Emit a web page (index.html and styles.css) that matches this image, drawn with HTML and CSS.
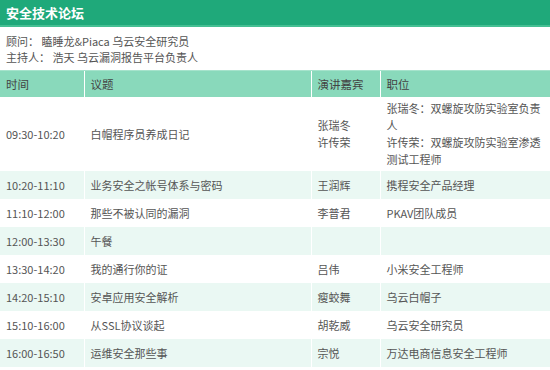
FILE: index.html
```html
<!DOCTYPE html>
<html lang="zh-CN">
<head>
<meta charset="utf-8">
<link rel="stylesheet" href="styles.css">
</head>
<body>
<div class="forum">
  <div class="title">安全技术论坛</div>
  <div class="info">
    <div>顾问： 瞌睡龙&amp;Piaca 乌云安全研究员</div>
    <div>主持人： 浩天 乌云漏洞报告平台负责人</div>
  </div>
  <table class="agenda">
    <colgroup>
      <col class="c-time"><col class="c-topic"><col class="c-speaker"><col class="c-role">
    </colgroup>
    <thead>
      <tr><th>时间</th><th>议题</th><th>演讲嘉宾</th><th>职位</th></tr>
    </thead>
    <tbody>
      <tr class="tall"><td>09:30-10:20</td><td>白帽程序员养成日记</td><td>张瑞冬<br>许传荣</td><td>张瑞冬：双螺旋攻防实验室负责人<br>许传荣：双螺旋攻防实验室渗透测试工程师</td></tr>
      <tr class="alt"><td>10:20-11:10</td><td>业务安全之帐号体系与密码</td><td>王润辉</td><td>携程安全产品经理</td></tr>
      <tr><td>11:10-12:00</td><td>那些不被认同的漏洞</td><td>李普君</td><td>PKAV团队成员</td></tr>
      <tr class="alt"><td>12:00-13:30</td><td>午餐</td><td></td><td></td></tr>
      <tr><td>13:30-14:20</td><td>我的通行你的证</td><td>吕伟</td><td>小米安全工程师</td></tr>
      <tr class="alt"><td>14:20-15:10</td><td>安卓应用安全解析</td><td>瘦蛟舞</td><td>乌云白帽子</td></tr>
      <tr><td>15:10-16:00</td><td>从SSL协议谈起</td><td>胡乾威</td><td>乌云安全研究员</td></tr>
      <tr class="alt"><td>16:00-16:50</td><td>运维安全那些事</td><td>宗悦</td><td>万达电商信息安全工程师</td></tr>
    </tbody>
  </table>
</div>
</body>
</html>
```

FILE: styles.css
```css
html, body {
  margin: 0;
  padding: 0;
  background: #fff;
}
body {
  font-family: "Noto Sans CJK SC", "Noto Sans", sans-serif;
  font-size: 11px;
  color: #555;
}
.forum {
  width: 550px;
}
.title {
  height: 25px;
  line-height: 25px;
  padding-left: 6px;
  background: #1fa97a;
  border-bottom: 2px solid #45bf93;
  color: #fff;
  font-size: 13px;
  font-weight: bold;
}
.info {
  padding: 6px 6px 5px;
  line-height: 16px;
  font-size: 11px;
}
.agenda {
  width: 550px;
  border-collapse: collapse;
  table-layout: fixed;
  line-height: 17px;
}
.c-time { width: 84px; }
.c-topic { width: 227px; }
.c-speaker { width: 69px; }
.c-role { width: 170px; }
.agenda th {
  background: #89d9bb;
  font-weight: normal;
  text-align: left;
  color: #444;
  height: 26px;
  padding: 0 6px;
  border-left: 1px solid #fff;
  border-top: 1px solid #a6e3cc;
  font-size: 11.5px;
}
.agenda th:first-child, .agenda td:first-child { border-left: none; }
.agenda td {
  padding: 3px 6px;
  height: 22px;
  border-left: 1px solid #fff;
  vertical-align: middle;
}
.agenda tr.alt td {
  background: #eaf8f3;
}
.agenda tr.tall td {
  height: auto;
}
```
